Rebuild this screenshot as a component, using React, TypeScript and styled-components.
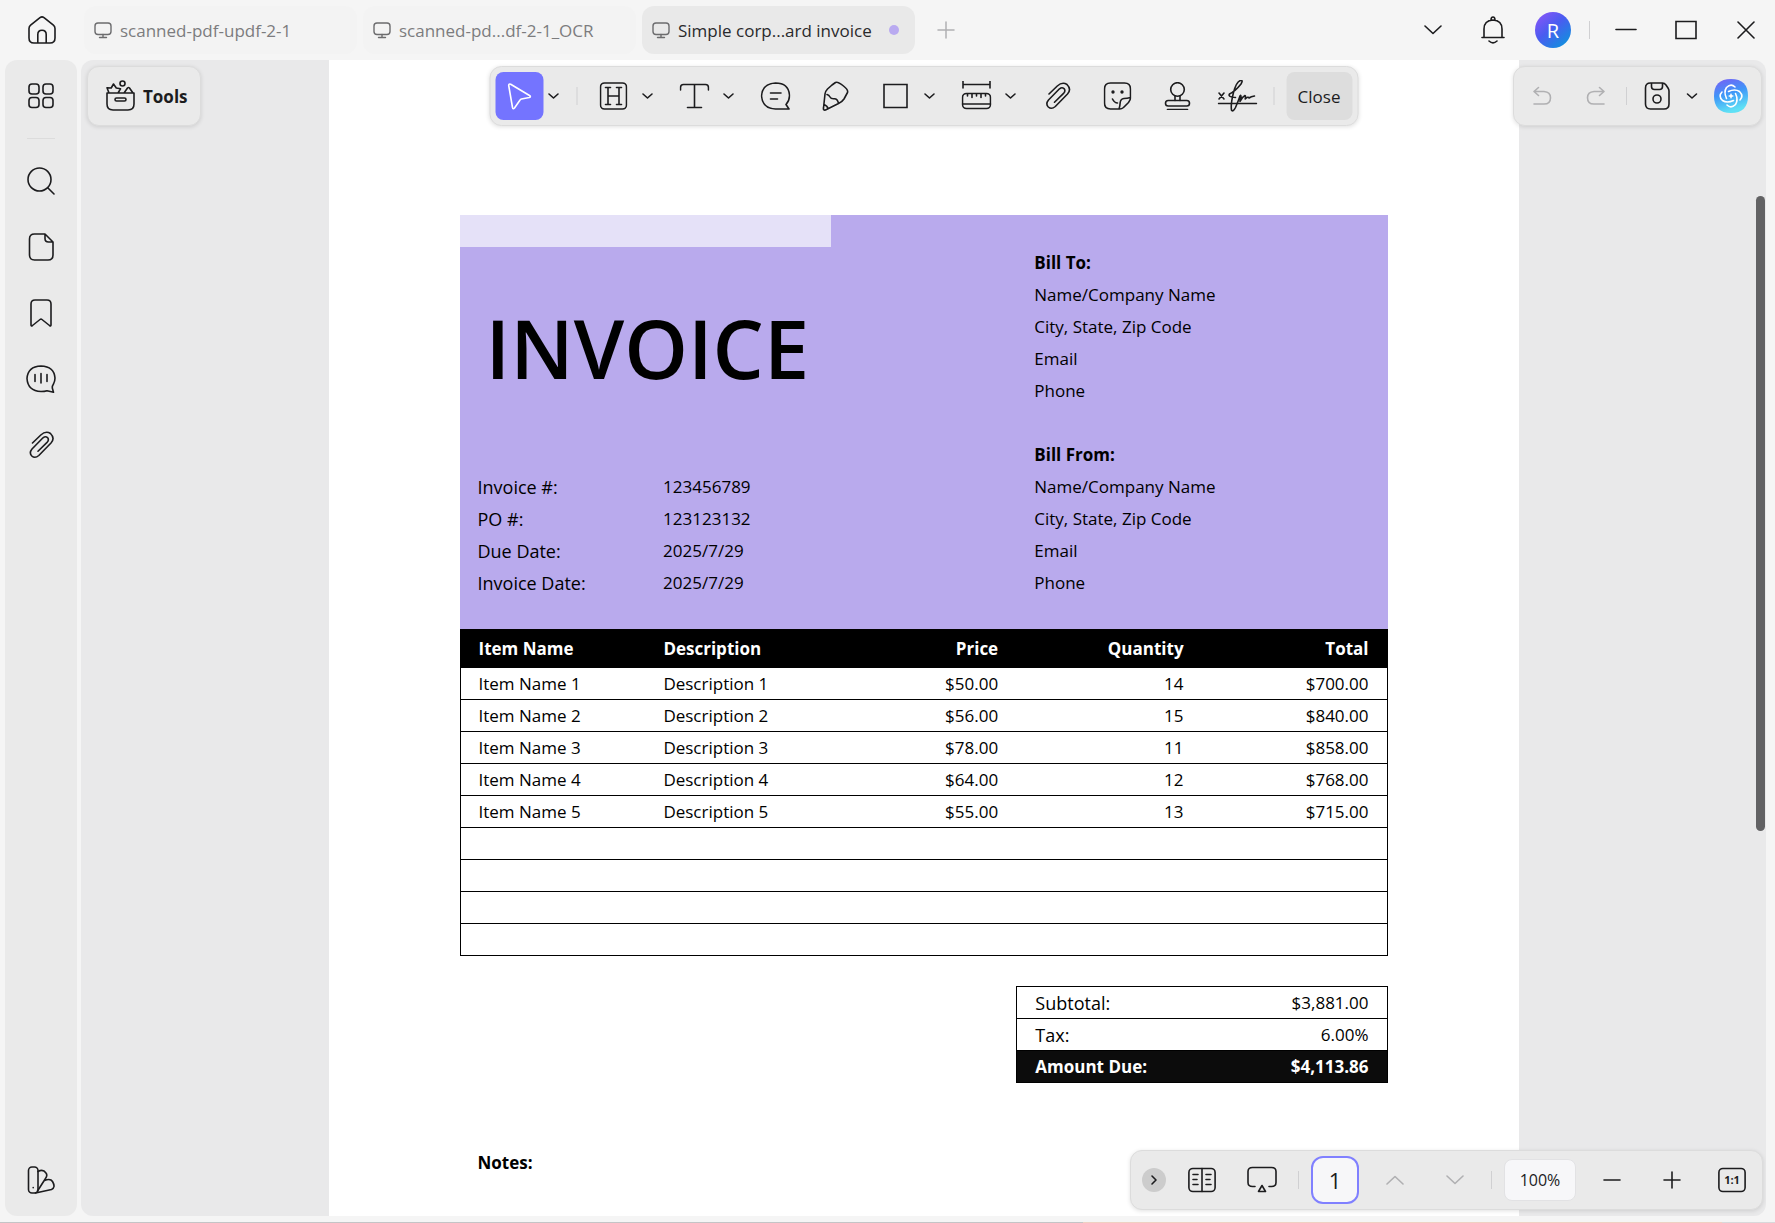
import React from "react";
import styled, { createGlobalStyle, css } from "styled-components";

const UI = `"Open Sans", "Noto Sans", sans-serif`;

const Global = createGlobalStyle`
  *, *::before, *::after { box-sizing: border-box; }
  body { margin: 0; background: #f5f5f5; font-family: ${UI}; color: #1c1c1e; }
  button { font: inherit; color: inherit; border: 0; padding: 0; background: none; }
  svg { display: block; flex: none; }
`;

const Shell = styled.div`
  height: 100vh;
  display: flex;
  flex-direction: column;
  overflow: hidden;
  background: #f5f5f5;
`;

/* ---------- title bar ---------- */
const TitleBar = styled.header`
  height: 60px;
  flex: none;
  display: flex;
  align-items: center;
  padding: 0 5px 0 18px;
`;
const IconButton = styled.button<{ $active?: boolean; $muted?: boolean }>`
  width: 48px;
  height: 48px;
  flex: none;
  display: grid;
  place-items: center;
  border-radius: 8px;
  color: ${(p) => (p.$muted ? "#b0b0b2" : "#1c1c1e")};
  ${(p) => p.$active && css`background: #7474ff; color: #fff;`}
`;
const Tabs = styled.nav`
  display: flex;
  gap: 6px;
  margin: 0 7px 0 18px;
`;
const Tab = styled.button<{ $active?: boolean }>`
  width: 273px;
  height: 48px;
  display: flex;
  align-items: center;
  gap: 8px;
  padding: 0 16px 0 10px;
  border-radius: 12px;
  font-size: 17px;
  line-height: 24px;
  white-space: nowrap;
  color: ${(p) => (p.$active ? "#2a2a2c" : "#7c7c7e")};
  background: ${(p) => (p.$active ? "#e9e9e9" : "#f3f3f3")};
  svg { color: #6c6c6e; }
`;
const TabTitle = styled.span`
  padding-top: 2px;
`;
const UnsavedDot = styled.span`
  width: 10px;
  height: 10px;
  margin-left: auto;
  border-radius: 50%;
  background: #b9aaf0;
`;
const TitleActions = styled.div`
  margin-left: auto;
  display: flex;
  align-items: center;
  gap: 12px;
`;
const Avatar = styled.span`
  width: 36px;
  height: 36px;
  display: grid;
  place-items: center;
  border-radius: 50%;
  font-size: 20px;
  color: #fff;
  background: linear-gradient(140deg, #8a55f8 5%, #4a5cf0 45%, #0a96dc 95%);
`;
const Rule = styled.span`
  width: 1px;
  height: 18px;
  flex: none;
  background: #d0d0d2;
`;

/* ---------- body ---------- */
const Body = styled.div`
  flex: 1;
  min-height: 0;
  display: flex;
  gap: 4px;
  padding: 0 9px 6px 5px;
`;
const SideBar = styled.aside`
  width: 72px;
  flex: none;
  display: flex;
  flex-direction: column;
  align-items: center;
  gap: 18px;
  padding: 12px 0;
  border-radius: 12px;
  background: #eaeaea;
  & > :last-child { margin-top: auto; }
`;
const SideRule = styled.span`
  width: 28px;
  height: 1px;
  background: #dcdcdc;
`;
const Canvas = styled.main`
  position: relative;
  flex: 1;
  min-width: 0;
  display: flex;
  justify-content: center;
  overflow: hidden;
  border-radius: 12px;
  background: #e9e9ea;
`;
const Panel = styled.div`
  height: 60px;
  display: flex;
  align-items: center;
  border: 1px solid #dcdcdc;
  border-radius: 12px;
  background: #eaeaea;
  box-shadow: 0 1px 4px rgba(0, 0, 0, 0.12);
`;
const FloatingTools = styled(Panel).attrs({ as: "button" })`
  position: absolute;
  top: 6px;
  left: 6px;
  gap: 8px;
  padding: 0 12px 0 17px;
  font-size: 17px;
  font-weight: 700;
`;
const MarkupBar = styled(Panel)`
  position: absolute;
  top: 6px;
  left: 50%;
  transform: translateX(-50%);
  gap: 12px;
  padding: 0 5px;
`;
const FileBar = styled(Panel)`
  position: absolute;
  top: 6px;
  right: 4px;
  gap: 6px;
  padding: 0 13px 0 4px;
`;
const ViewBar = styled(Panel)`
  position: absolute;
  right: 3px;
  bottom: 6px;
  gap: 12px;
  padding: 0 6px 0 11px;
`;
const Group = styled.div`
  display: flex;
  align-items: center;
`;
const MenuButton = styled.button`
  width: 21px;
  height: 48px;
  display: grid;
  place-items: center;
`;
const CloseButton = styled.button`
  width: 66px;
  height: 48px;
  border-radius: 8px;
  font-size: 17px;
  background: #dddddd;
`;
const AiButton = styled.button`
  margin-left: 6px;
`;
const ExpandButton = styled.button`
  width: 24px;
  height: 24px;
  display: grid;
  place-items: center;
  border-radius: 50%;
  background: #cccccc;
`;
const PageInput = styled.input`
  width: 48px;
  height: 48px;
  border: 2px solid #8080ff;
  border-radius: 12px;
  background: #f7f7f9;
  font: 22px ${UI};
  text-align: center;
  padding: 0;
  color: #1c1c1e;
`;
const ZoomInput = styled.input`
  width: 72px;
  height: 42px;
  border: 1px solid #e2e2e4;
  border-radius: 8px;
  background: #f7f7f9;
  font: 16px ${UI};
  text-align: center;
  padding: 0;
  color: #1c1c1e;
`;
const ScrollThumb = styled.div`
  position: absolute;
  top: 136px;
  right: 1px;
  width: 9px;
  height: 635px;
  border-radius: 5px;
  background: #626264;
`;
const WindowEdge = styled.footer`
  height: 1px;
  flex: none;
  background: linear-gradient(90deg, #c4c4c6 0 61%, #efd0c2 61% 97%, #d8d8da 97%);
`;

/* ---------- document ---------- */
const Sheet = styled.article`
  width: 100%;
  max-width: 1190px;
  min-height: 1600px;
  flex: none;
  padding: 155px 131px 0;
  background: #fff;
  color: #000;
  font: 17px/32px ${UI};
`;
const Hero = styled.section`
  display: grid;
  grid-template-columns: repeat(5, 1fr);
  grid-auto-rows: 32px;
  padding-bottom: 30px;
  background: #b9aaed;
`;
const Accent = styled.div`
  grid-column: 1 / span 2;
  background: #e5e1f8;
`;
const Heading = styled.h1`
  grid-column: 1 / span 3;
  grid-row: 2 / span 7;
  align-self: center;
  margin: 0;
  padding: 0 0 22px 26px;
  font: 600 81px/96px ${UI};
`;
const Meta = styled.dl`
  grid-column: 1 / span 3;
  grid-row: 9 / span 4;
  display: grid;
  grid-template-columns: repeat(3, 1fr);
  margin: 0;
  dt { grid-column: 1; padding-left: 18px; font-size: 18px; }
  dd { grid-column: 2; margin: 0; padding-left: 18px; }
`;
const Address = styled.address<{ $row: number }>`
  grid-column: 4 / span 2;
  grid-row: ${(p) => p.$row} / span 5;
  display: flex;
  flex-direction: column;
  padding-left: 18px;
  font-style: normal;
`;
const Items = styled.table`
  width: 100%;
  table-layout: fixed;
  border-collapse: collapse;
  th { height: 38px; background: #000; color: #fff; }
  tr { border: 1px solid #000; }
  td { height: 32px; }
  th, td { padding: 0 18px; line-height: 24px; text-align: right; }
  th:nth-child(-n + 2), td:nth-child(-n + 2) { text-align: left; }
`;
const Totals = styled.table`
  width: 40%;
  margin: 30px 0 0 auto;
  border-collapse: collapse;
  tr { border: 1px solid #000; }
  th, td { height: 32px; padding: 0 18px; line-height: 24px; font-weight: 400; text-align: right; }
  th { text-align: left; font-size: 18px; }
  tr:last-child { background: #0c0c0c; color: #fff; }
  tr:last-child > * { font-size: 17px; font-weight: 700; }
`;
const Notes = styled.h2`
  margin: 64px 0 0;
  padding-left: 18px;
  font: 700 17px/32px ${UI};
`;

/* ---------- icons ---------- */
const Svg = ({ w = 28, h = w, sw = 1.6, children }: { w?: number; h?: number; sw?: number; children: React.ReactNode }) => (
  <svg width={w} height={h} viewBox={`0 0 ${w} ${h}`} fill="none" stroke="currentColor" strokeWidth={sw} strokeLinecap="round" strokeLinejoin="round" aria-hidden="true">
    {children}
  </svg>
);
const HomeIcon = () => <Svg><path d="M12 1.6 2.6 9.2Q1 10.5 1 12.6V22q0 5 5 5h16q5 0 5-5v-9.4q0-2.1-1.6-3.4L16 1.6q-2-1.4-4 0ZM9.8 27V18.500q0-4.300 4.200-4.300t4.200 4.300V27" /></Svg>;
const MonitorIcon = () => <Svg w={18} sw={1.4}><rect x="1" y="2" width="16" height="11.500" rx="3" /><path d="M9 13.500v3M5.500 16.500h7" /></Svg>;
const PlusIcon = ({ size = 18, sw = 1.500 }: { size?: number; sw?: number }) => <Svg w={size} sw={sw}><path d={`M${size / 2} 1v${size - 2}M1 ${size / 2}h${size - 2}`} /></Svg>;
const ChevronDown = () => <Svg w={18} h={10}><path d="m1 1 8 7.500L17 1" /></Svg>;
const SmallChevron = () => <Svg w={12} h={8}><path d="m1.500 2 4.500 4 4.500-4" /></Svg>;
const BellIcon = () => <Svg><path d="M3 21.500h22M5 21.500V13q0-8.500 9-9 9 .5 9 9v8.500M12 4q0-3 2-3t2 3M10 25q4 3.800 8 0" /></Svg>;
const GridIcon = () => <Svg>{[[2, 2], [16, 2], [2, 15.500], [16, 15.500]].map(([x, y]) => <rect key={`${x}-${y}`} x={x} y={y} width="10" height="10" rx="3" />)}</Svg>;
const SearchIcon = () => <Svg><circle cx="12.500" cy="12.500" r="11.500" /><path d="m21 21 6 6" /></Svg>;
const FileIcon = () => <Svg><path d="M7.500 1H18l8 8v13q0 5-5 5H7.500q-5 0-5-5V6q0-5 5-5ZM18 1v4.500Q18 9 21.500 9H26" /></Svg>;
const BookmarkIcon = () => <Svg><path d="M4 26V5q0-4 4-4h12q4 0 4 4v21q0 1.500-1.500.5L15 20.500q-1-.8-2 0l-7.500 6Q4 27.500 4 26Z" /></Svg>;
const ChatIcon = () => <Svg w={30}><path d="M27.500 20Q29 17 29 14q-.8-11.500-14-12Q1.800 2.500 1 14.500 1.800 27 15 27.500q3.500 0 6-.8l6.500 1.600-1.200-4.300q-.3-2 1.200-4ZM9 10.500v7M15 9.500v9.500M21 10.500v7" /></Svg>;
const ClipIcon = () => <Svg><path d="M4.500 12 12.800 4q5-4.500 9.700-1.500 4.800 4.800.5 9.500L10.800 24.500q-3.800 3.300-7 .5-3-3.200.2-7L15 6.800q2.500-2 4.500-.2 1.800 2.200-.2 4.500L10 20.200" transform="translate(1 0)" /></Svg>;
const SwatchIcon = () => <Svg><rect x="1.500" y="1" width="9.500" height="26" rx="3.500" /><path d="M11 5.500q5-3 8 1.500 1.800 2.500-.5 5.500L10.500 25M17.500 14.500q6-2.500 8 1 3.500 6-1 8L8.500 27M6.200 21.500v.2" /></Svg>;
const ToolboxIcon = () => <Svg w={30} h={32}><path d="M2 13h27v11q0 6-6 6H8q-6 0-6-6ZM4 13 2 7.800l4.200.2L8.500 4l2.800 4 4.200.8L13 13M19 13l3.500-5q1-1 2 0l3.500 5" /><circle cx="17.500" cy="3.500" r="2.500" /><rect x="10" y="18" width="11" height="3" rx="1.500" /></Svg>;
const CursorIcon = () => <Svg><path d="M3.200 3.500q0-2 2-1.200L24 13.500q1.800 1.300-.2 2L16 17q-1 .2-1.600 1.200L9 26q-1.500 1.500-2-.5Z" /></Svg>;
const HighlightIcon = () => <Svg><rect x="1" y="1" width="26" height="26" rx="4" /><path d="M6 5.500h5M17 5.500h5M6 22.500h5M17 22.500h5M8.500 5.500v17M19.500 5.500v17M8.500 14h11" /></Svg>;
const TextIcon = () => <Svg w={30} h={28}><path d="M1 8V5.500Q1 2.500 4 2.500h22q3 0 3 3V8M15 2.500v23M8 25.500h14" /></Svg>;
const CommentIcon = () => <Svg w={30} h={28}><path d="M15 1Q28 1 29 13q.3 5-3.500 9.500L28.500 27H15Q2 26.500 1 14 2 1.500 15 1ZM10 11h10.500M10 17h7" /></Svg>;
const MarkerIcon = () => <Svg w={28} h={30}><path d="M10.500 4 14 1.500q2.500-1 8 3.500 5 4 4 6.500L22.500 18q-2 3-5.500 4.500L4 29q-2.500.5-2-2L3.500 13q.5-3 2.500-5ZM5.500 13.500q2 .5 3 2.500t4 1.800q3.500-.3 4.500 4.500M2.500 23.500Q6 25 6.500 27.500" /></Svg>;
const SquareIcon = () => <Svg><path d="M2.500 2.500h23v23h-23z" strokeLinejoin="miter" /></Svg>;
const RulerIcon = () => <Svg w={30}><path d="M1.500 0v7M28.500 0v7M1.500 3.500h27M6 13v2M10.500 13v3.500M15 13v2M19.500 13v3.500M24 13v2M1 23h28" /><rect x="1" y="12.500" width="28" height="15" rx="4" /></Svg>;
const StickerIcon = () => <Svg><path d="M15.500 27H7q-6 0-6-6V7q0-6 6-6h14q6 0 6 6v9q0 2-2 4.500l-5 5q-2 1.800-4.500 1.500ZM15.500 27q1-3 1.200-6.500.3-3.500 3.800-4 3-.2 6.500-1M9 17q2 4 5 4" /><circle cx="9.500" cy="10" r=".9" fill="currentColor" /><circle cx="18.500" cy="10" r=".9" fill="currentColor" /></Svg>;
const StampIcon = () => <Svg><circle cx="14" cy="7.500" r="6.800" /><path d="M11.500 14v4.500M16.500 14v4.500M4 27.500h20" /><rect x="2" y="18.500" width="24" height="5.500" rx="2.700" /></Svg>;
const SignIcon = () => <Svg w={40} h={32}><path d="m1.500 13 5 6M6.500 13l-5 6M1 23.500h38" /><path d="M18 17.500Q10 17 12 14q6-3 11.500-10 2.500-4-.5-3.500-4 1-7 12-3 12-2 17.500 1.500 2.500 4-2.500 3-7 4.500-11.500 1-1.500 1 .5l-1 5q2-4.500 5-6 1 0 .2 3.500 3-3 3.800-1 2-1.500 5.500-2" /></Svg>;
const UndoIcon = ({ flip }: { flip?: boolean }) => <Svg w={20}><g transform={flip ? "matrix(-1 0 0 1 20 0)" : undefined}><path d="M6.500 1.500 2 5.500l4.500 4M2.500 5.500H12q6.500.5 6.500 6.200Q18.500 18 12 18H2" /></g></Svg>;
const SaveIcon = () => <Svg><path d="M7.500 1h12q2 0 3.500 2l2 3q1 1.500 1 3v13q0 5-5 5H7.500q-5 0-5-5V6q0-5 5-5ZM8.500 1.500v3q0 3 3 3h5q3 0 3-3v-3" /><circle cx="14" cy="17" r="4" /></Svg>;
const AiIcon = () => (
  <svg width="34" height="34" viewBox="0 0 34 34" aria-hidden="true">
    <defs><linearGradient id="ai" x1="0" y1="0" x2=".3" y2="1"><stop offset="0" stopColor="#7a5cf5" /><stop offset=".5" stopColor="#3f96f8" /><stop offset="1" stopColor="#5fe0f5" /></linearGradient></defs>
    <path d="M17 0Q34 0 34 17T17 34 0 17 17 0Z" fill="url(#ai)" />
    <g fill="none" stroke="#fff" strokeWidth="1.600" strokeLinecap="round">
      {[0, 90, 180, 270].map((a) => <path key={a} transform={`rotate(${a} 17 17)`} d="M12.500 8.500Q17 4 21 8M12.500 8.500Q9.500 13 12.500 19.500" />)}
    </g>
    <path d="m17 14 1 2 2 1-2 1-1 2-1-2-2-1 2-1z" fill="#fff" />
  </svg>
);
const BookIcon = () => <Svg><rect x="0.900" y="2.500" width="26.200" height="23" rx="4" /><path d="M14 2.500v23M5 8.500h5M5 13.500h4M5 18.500h5M18 8.500h5M18 13.500h4M18 18.500h5" /></Svg>;
const PresentIcon = () => <Svg w={30}><path d="M8 21.500H5.500q-4.500 0-4.500-4V6.500q0-4 4.500-4h19q4.500 0 4.500 4v11q0 4-4.500 4H22M15 20.500l3.500 6h-7z" /></Svg>;
const OneIcon = () => (
  <Svg><rect x="0.900" y="2.500" width="26.200" height="23" rx="4" /><text x="14" y="18" textAnchor="middle" fontSize="11" fontWeight="700" fontFamily="Open Sans, sans-serif" fill="currentColor" stroke="none">1:1</text></Svg>
);

/* ---------- data ---------- */
const tabs = [
  { title: "scanned-pdf-updf-2-1" },
  { title: "scanned-pd...df-2-1_OCR" },
  { title: "Simple corp...ard invoice", active: true },
];
const markup = [
  { label: "Highlight", icon: <HighlightIcon />, menu: true },
  { label: "Text", icon: <TextIcon />, menu: true },
  { label: "Comment", icon: <CommentIcon /> },
  { label: "Marker", icon: <MarkerIcon /> },
  { label: "Shape", icon: <SquareIcon />, menu: true },
  { label: "Measure", icon: <RulerIcon />, menu: true },
  { label: "Attach", icon: <ClipIcon /> },
  { label: "Sticker", icon: <StickerIcon /> },
  { label: "Stamp", icon: <StampIcon /> },
  { label: "Signature", icon: <SignIcon /> },
];
const side = [
  { label: "Search", icon: <SearchIcon /> },
  { label: "Pages", icon: <FileIcon /> },
  { label: "Bookmarks", icon: <BookmarkIcon /> },
  { label: "Comments", icon: <ChatIcon /> },
  { label: "Attachments", icon: <ClipIcon /> },
  { label: "Theme", icon: <SwatchIcon /> },
];
const meta = [
  ["Invoice #:", "123456789"],
  ["PO #:", "123123132"],
  ["Due Date:", "2025/7/29"],
  ["Invoice Date:", "2025/7/29"],
];
const contact = ["Name/Company Name", "City, State, Zip Code", "Email", "Phone"];
const items = [
  ["Item Name 1", "Description 1", "$50.00", "14", "$700.00"],
  ["Item Name 2", "Description 2", "$56.00", "15", "$840.00"],
  ["Item Name 3", "Description 3", "$78.00", "11", "$858.00"],
  ["Item Name 4", "Description 4", "$64.00", "12", "$768.00"],
  ["Item Name 5", "Description 5", "$55.00", "13", "$715.00"],
];
const totals = [
  ["Subtotal:", "$3,881.00"],
  ["Tax:", "6.00%"],
  ["Amount Due:", "$4,113.86"],
];

const Invoice = () => (
  <Sheet>
    <Hero>
      <Accent />
      <Heading>INVOICE</Heading>
      <Meta>
        {meta.map(([k, v]) => (
          <React.Fragment key={k}><dt>{k}</dt><dd>{v}</dd></React.Fragment>
        ))}
      </Meta>
      {["Bill To:", "Bill From:"].map((title, i) => (
        <Address key={title} $row={2 + i * 6}>
          <b>{title}</b>
          {contact.map((line) => <span key={line}>{line}</span>)}
        </Address>
      ))}
    </Hero>
    <Items>
      <thead>
        <tr>{["Item Name", "Description", "Price", "Quantity", "Total"].map((h) => <th key={h} scope="col">{h}</th>)}</tr>
      </thead>
      <tbody>
        {items.map((row) => <tr key={row[0]}>{row.map((c, i) => <td key={i}>{c}</td>)}</tr>)}
        {[0, 1, 2, 3].map((r) => <tr key={r}><td colSpan={5} /></tr>)}
      </tbody>
    </Items>
    <Totals>
      <tbody>
        {totals.map(([k, v]) => <tr key={k}><th scope="row">{k}</th><td>{v}</td></tr>)}
      </tbody>
    </Totals>
    <Notes>Notes:</Notes>
  </Sheet>
);

export default function App() {
  return (
    <Shell>
      <Global />
      <TitleBar>
        <IconButton aria-label="Home"><HomeIcon /></IconButton>
        <Tabs>
          {tabs.map((t) => (
            <Tab key={t.title} $active={t.active}>
              <MonitorIcon /><TabTitle>{t.title}</TabTitle>{t.active && <UnsavedDot />}
            </Tab>
          ))}
        </Tabs>
        <IconButton $muted aria-label="New tab"><PlusIcon /></IconButton>
        <TitleActions>
          <IconButton aria-label="Tab list"><ChevronDown /></IconButton>
          <IconButton aria-label="Notifications"><BellIcon /></IconButton>
          <IconButton aria-label="Account"><Avatar>R</Avatar></IconButton>
          <Rule />
          <IconButton aria-label="Minimize"><Svg w={22}><path d="M1 10.500h20" /></Svg></IconButton>
          <IconButton aria-label="Maximize"><Svg w={22}><path d="M1 2.500h20v17H1z" strokeLinejoin="miter" /></Svg></IconButton>
          <IconButton aria-label="Close window"><Svg w={18}><path d="m1 1 16 16M17 1 1 17" /></Svg></IconButton>
        </TitleActions>
      </TitleBar>
      <Body>
        <SideBar>
          <IconButton aria-label="Thumbnails"><GridIcon /></IconButton>
          <SideRule />
          {side.map((s) => <IconButton key={s.label} aria-label={s.label}>{s.icon}</IconButton>)}
        </SideBar>
        <Canvas>
          <Invoice />
          <ScrollThumb />
          <FloatingTools><ToolboxIcon />Tools</FloatingTools>
          <MarkupBar>
            <Group>
              <IconButton $active aria-label="Select"><CursorIcon /></IconButton>
              <MenuButton aria-label="Select options"><SmallChevron /></MenuButton>
            </Group>
            <Rule />
            {markup.map((m) => (
              <Group key={m.label}>
                <IconButton aria-label={m.label}>{m.icon}</IconButton>
                {m.menu && <MenuButton aria-label={`${m.label} options`}><SmallChevron /></MenuButton>}
              </Group>
            ))}
            <Rule />
            <CloseButton>Close</CloseButton>
          </MarkupBar>
          <FileBar>
            <IconButton $muted aria-label="Undo"><UndoIcon /></IconButton>
            <IconButton $muted aria-label="Redo"><UndoIcon flip /></IconButton>
            <Rule />
            <Group>
              <IconButton aria-label="Save"><SaveIcon /></IconButton>
              <MenuButton aria-label="Save options"><SmallChevron /></MenuButton>
            </Group>
            <AiButton aria-label="AI assistant"><AiIcon /></AiButton>
          </FileBar>
          <ViewBar>
            <ExpandButton aria-label="Collapse"><Svg w={8} h={12}><path d="m2 2 4 4-4 4" /></Svg></ExpandButton>
            <IconButton aria-label="Page layout"><BookIcon /></IconButton>
            <IconButton aria-label="Present"><PresentIcon /></IconButton>
            <Rule />
            <PageInput aria-label="Page" defaultValue="1" />
            <IconButton $muted aria-label="Previous page"><Svg w={18} h={10}><path d="m1 9 8-7.500L17 9" /></Svg></IconButton>
            <IconButton $muted aria-label="Next page"><ChevronDown /></IconButton>
            <Rule />
            <ZoomInput aria-label="Zoom" defaultValue="100%" />
            <IconButton aria-label="Zoom out"><Svg w={18}><path d="M1 9h16" /></Svg></IconButton>
            <IconButton aria-label="Zoom in"><PlusIcon sw={1.6} /></IconButton>
            <IconButton aria-label="Actual size"><OneIcon /></IconButton>
          </ViewBar>
        </Canvas>
      </Body>
      <WindowEdge />
    </Shell>
  );
}
